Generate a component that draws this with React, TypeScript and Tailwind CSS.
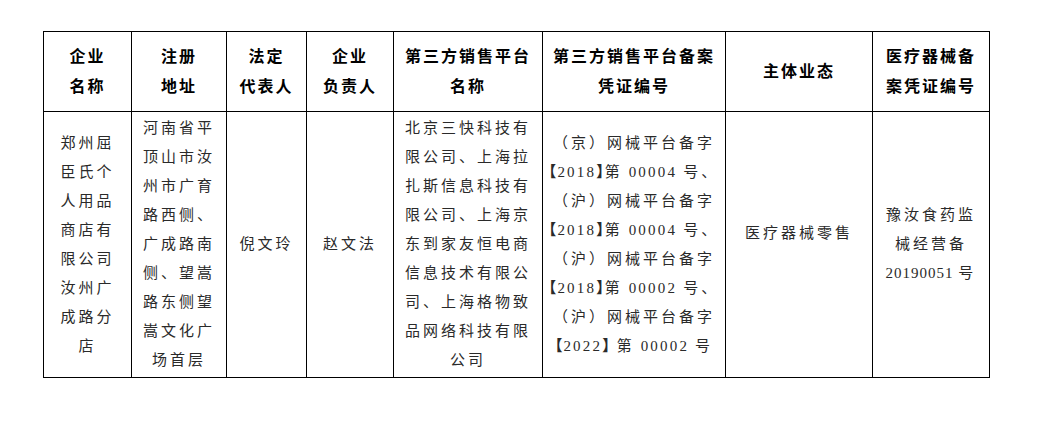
import React from 'react';

const headers: string[][] = [
    ['企业', '名称'],
    ['注册', '地址'],
    ['法定', '代表人'],
    ['企业', '负责人'],
    ['第三方销售平台', '名称'],
    ['第三方销售平台备案', '凭证编号'],
    ['主体业态'],
    ['医疗器械备', '案凭证编号'],
];

const widths = [88, 95, 80, 87, 149, 183, 147, 117];

const body: string[][] = [
    ['郑州屈', '臣氏个', '人用品', '商店有', '限公司', '汝州广', '成路分', '店'],
    ['河南省平', '顶山市汝', '州市广育', '路西侧、', '广成路南', '侧、望嵩', '路东侧望', '嵩文化广', '场首层'],
    ['倪文玲'],
    ['赵文法'],
    ['北京三快科技有', '限公司、上海拉', '扎斯信息科技有', '限公司、上海京', '东到家友恒电商', '信息技术有限公', '司、上海格物致', '品网络科技有限', '公司'],
    [
        '（京）网械平台备字',
        '【2018】第 00004 号、',
        '（沪）网械平台备字',
        '【2018】第 00004 号、',
        '（沪）网械平台备字',
        '【2018】第 00002 号、',
        '（沪）网械平台备字',
        '【2022】 第 00002 号',
    ],
    ['医疗器械零售'],
    ['豫汝食药监', '械经营备', '20190051 号'],
];

// split a line into runs so digits and brackets get their own spacing
const MixedLine = ({ text }: { text: string }) => {
    const runs = text.match(/[0-9 ]+|[【】]|[^0-9 【】]+/g) ?? [];
    const wide = text.includes('【');
    return (
        <div className="whitespace-nowrap">
            {runs.map((r, i) => {
                if (/^[0-9 ]+$/.test(r)) {
                    return (
                        <span key={i} className={wide ? 'tracking-[2.2px]' : 'tracking-[1px]'}>
                            {r}
                        </span>
                    );
                }
                if (r === '【' || r === '】') {
                    return (
                        <span key={i} className="tracking-[1px] font-bold [font-feature-settings:'halt']">
                            {r}
                        </span>
                    );
                }
                return <span key={i}>{r}</span>;
            })}
        </div>
    );
};

export default function App() {
    return (
        <div className="w-[1038px] h-[431px] bg-white pl-[43px] pt-[31px] font-['Liberation_Serif','Noto_Sans_CJK_SC',serif]">
            <table className="table-fixed border-collapse w-[946px]">
                <colgroup>
                    {widths.map((w, i) => (
                        <col key={i} style={{ width: w }} />
                    ))}
                </colgroup>
                <thead>
                    <tr className="h-[80px]">
                        {headers.map((lines, i) => (
                            <th key={i} className="border border-black p-0 text-center align-middle text-[16px] leading-[30px] font-bold tracking-[2px] text-black">
                                {lines.map((l) => (
                                    <div key={l} className="whitespace-nowrap">
                                        {l}
                                    </div>
                                ))}
                            </th>
                        ))}
                    </tr>
                </thead>
                <tbody>
                    <tr className="h-[266px]">
                        {body.map((lines, i) => (
                            <td
                                key={i}
                                className={`border border-black p-0 text-center align-middle text-[15px] leading-[29px] tracking-[3px] text-[#2a2a2a] ${i === 6 ? 'pb-[23px]' : ''}`}
                            >
                                {lines.map((l, j) => (
                                    <MixedLine key={j} text={l} />
                                ))}
                            </td>
                        ))}
                    </tr>
                </tbody>
            </table>
        </div>
    );
}
